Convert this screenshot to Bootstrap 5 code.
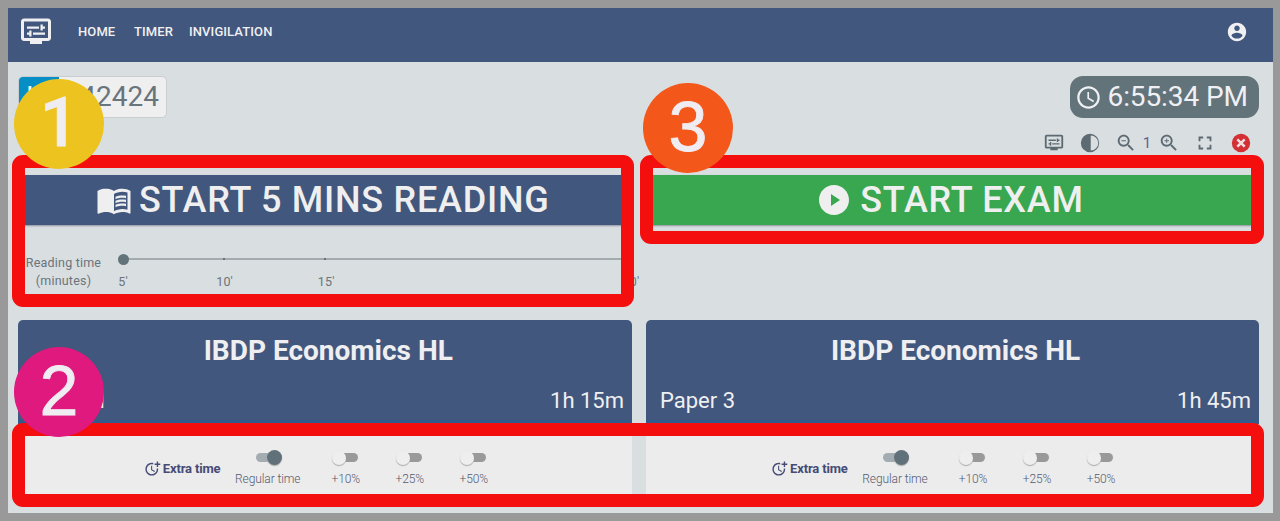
<!DOCTYPE html>
<html lang="en">
<head>
<meta charset="utf-8">
<meta name="viewport" content="width=device-width, initial-scale=1">
<title>Exam timer</title>
<link href="https://cdn.jsdelivr.net/npm/bootstrap@5.3.0/dist/css/bootstrap.min.css" rel="stylesheet">
<style>
  :root { --slate: #42577d; --paper: #d9dee1; --soft: #ececed; --grey: #62737a; }
  body { font-family: Roboto, sans-serif; background: #999; height: 521px; padding: 8px 7.5px 8px 8px; overflow: hidden; position: relative; color: #6a747b; }
  svg { fill: currentColor; display: block; flex: none; }
  .app-shell { background: var(--paper); height: 505px; }
  .top-nav { background: var(--slate); color: #f0f0f2; height: 54px; padding: 0 25px 7px 10px; --bs-navbar-padding-y: 0; }
  .top-nav .nav-link { color: #f0f0f2; font-size: 13px; font-weight: 500; letter-spacing: .1px; padding: 0; line-height: 20px; }
  .page-main { padding: 14px 14px 0 10px; }
  .code-box { width: 149px; height: 42px; border: 1px solid #c9cdd0; border-radius: 5px; background: #efeff0; font-size: 28px; overflow: hidden; }
  .code-box .tag { background: #078fc5; color: #fff; width: 40px; }
  .clock-pill { background: var(--grey); color: #f0f0f4; height: 42px; width: 189px; border-radius: 13px; font-size: 28px; gap: 6px; padding-left: 5px; letter-spacing: -.1px; }
  .tools { height: 50px; color: #5d6a72; }
  .tools > span { width: 36px; }
  .tools > small { width: 7px; font-size: 15px; color: #5d6391; }
  .halves { display: grid; grid-template-columns: 613.5px 613px; column-gap: 14px; }
  .big-btn { height: 50px; padding: 0 4px 0 0; border: 0; border-radius: 4px; font-size: 36px; font-weight: 500; line-height: 50px; letter-spacing: .75px; box-shadow: 0 1px 2px #8b939d; gap: 7px; margin-top: 7px; }
  .big-btn, .big-btn:hover { color: #efeff0; }
  .btn-exam { gap: 8px; }
  .btn-read, .btn-read:hover { background: var(--slate); }
  .btn-exam, .btn-exam:hover { background: #38a74f; }
  .slider-row { height: 95px; padding-top: 29px; font-size: 12.5px; letter-spacing: .2px; }
  .slider-row .caption { width: 91px; line-height: 18px; text-align: center; }
  .slider { width: 508px; margin-left: 14px; }
  .rail { height: 2px; background: #a3abaf; margin-top: 4px; display: flex; justify-content: space-between; align-items: center; }
  .rail i { width: 2px; height: 2px; background: #62737a; }
  .rail i:first-child { width: 11px; height: 11px; border-radius: 50%; margin: 0 -5.5px; }
  .rail i:nth-child(n+4) { background: none; }
  .marks { margin: 13px -20px 0; display: flex; justify-content: space-between; line-height: 18px; }
  .marks span { width: 40px; text-align: center; }
  .exam-card { border: 0; border-radius: 5px; background: var(--soft); overflow: hidden; height: 181px; color: inherit; }
  .exam-head { background: var(--slate); color: #efeff1; height: 104px; border-bottom: 4px solid #315b8c; padding: 15px 7.5px 0 14.5px; }
  .exam-head h2 { font-size: 28px; font-weight: 700; line-height: 32px; margin: 0 0 18px; text-align: center; }
  .exam-head .facts { font-size: 22px; line-height: 32px; }
  .extras { height: 77px; padding-top: 25px; font-size: 12px; }
  .extra-title { width: 78px; font-size: 13px; font-weight: 700; color: #454b75; gap: 2px; padding-top: 10px; letter-spacing: -.15px; }
  .opt { width: 64px; text-align: center; line-height: 15px; font-weight: 300; color: #555b70; letter-spacing: -.1px; }
  .opt.wide { width: 92px; }
  .toggle { width: 24px; height: 9px; border-radius: 5px; background: #999; margin: 4px auto 10px; display: flex; align-items: center; }
  .toggle::before { content: ""; width: 14px; height: 14px; border-radius: 50%; flex: none; background: #eeeeef; margin-left: -2px; box-shadow: 0 1px 1px #aaa; }
  .toggle.on { background: #a3adb1; }
  .toggle.on::before { background: #607179; margin-left: 11px; width: 15px; height: 15px; }
  /* tutorial callouts laid over the page */
  .callout { position: absolute; border: 13px solid #f40e0e; border-radius: 11px; pointer-events: none; }
  .step { position: absolute; width: 90px; height: 90px; border-radius: 50%; color: #efedf2; font: 70px/88px "Liberation Sans", sans-serif; text-align: center; -webkit-text-stroke: .8px #efedf2; }
  .step-one { font-family: Roboto, sans-serif; font-size: 68px; font-weight: 500; line-height: 88px; }
</style>
</head>
<body>
<svg class="d-none">
  <symbol id="monitor" viewBox="0 0 24 24"><path d="M20 3H4c-1.1 0-2 .9-2 2v11c0 1.1.9 2 2 2h4v2h8v-2h4c1.1 0 2-.9 2-2V5c0-1.1-.9-2-2-2zm0 13H4V5h16v11zM6 8.25h8v1.5H6zM16.5 9.75H18v-1.5h-1.5V7H15v4h1.5zM10 12.25h8v1.5h-8zM7.500 15H9v-4H7.500v1.250H6v1.500h1.500z"/></symbol>
  <symbol id="more-time" viewBox="0 0 24 24"><path d="M10 8v6l4.700 2.900.800-1.200-4-2.400V8zM17.920 12c.050.330.080.660.080 1 0 3.900-3.100 7-7 7s-7-3.100-7-7 3.100-7 7-7c.700 0 1.370.100 2 .290V4.230C12.360 4.080 11.690 4 11 4c-5 0-9 4-9 9s4 9 9 9 9-4 9-9c0-.340-.020-.670-.060-1zM20 5V2h-2v3h-3v2h3v3h2V7h3V5z"/></symbol>
</svg>

<div class="app-shell">
  <nav class="navbar top-nav flex-nowrap justify-content-start">
    <svg width="36" height="36"><use href="#monitor"/></svg>
    <div class="navbar-nav flex-row" style="margin-left:24px">
      <a class="nav-link" style="width:56px" href="#">HOME</a>
      <a class="nav-link" style="width:55px" href="#">TIMER</a>
      <a class="nav-link" href="#">INVIGILATION</a>
    </div>
    <svg class="ms-auto" width="22" height="22" viewBox="0 0 24 24"><path d="M12 2C6.480 2 2 6.480 2 12s4.480 10 10 10 10-4.480 10-10S17.520 2 12 2zm0 3c1.660 0 3 1.340 3 3s-1.340 3-3 3-3-1.340-3-3 1.340-3 3-3zm0 14.200c-2.500 0-4.710-1.280-6-3.220.030-1.990 4-3.080 6-3.080 1.990 0 5.970 1.090 6 3.080-1.290 1.940-3.500 3.220-6 3.220z"/></svg>
  </nav>

  <main class="page-main">
    <div class="d-flex justify-content-between">
      <div class="code-box d-flex align-items-stretch">
        <span class="tag d-flex align-items-center justify-content-center">ID</span>
        <span class="flex-fill text-end align-self-center" style="padding-right:7px">242424</span>
      </div>
      <div class="clock-pill d-flex align-items-center">
        <svg width="27" height="27" viewBox="0 0 24 24"><path d="M11.990 2C6.470 2 2 6.480 2 12s4.470 10 9.990 10C17.520 22 22 17.520 22 12S17.520 2 11.990 2zM12 20c-4.420 0-8-3.580-8-8s3.580-8 8-8 8 3.580 8 8-3.580 8-8 8zm.500-13H11v6l5.250 3.150.750-1.230-4.500-2.670z"/></svg>
        <span>6:55:34 PM</span>
      </div>
    </div>

    <div class="tools d-flex justify-content-end align-items-center">
      <span><svg class="mx-auto" width="22" height="22"><use href="#monitor"/></svg></span>
      <span><svg class="mx-auto" width="22" height="22" viewBox="0 0 24 24"><path d="M12 2a10 10 0 1 0 0 20 10 10 0 0 0 0-20zm.800 1.800a8.200 8.200 0 0 1 0 16.400z"/></svg></span>
      <span><svg class="mx-auto" width="22" height="22" viewBox="0 0 24 24"><path d="M15.500 14h-.790l-.280-.270C15.410 12.590 16 11.110 16 9.500 16 5.910 13.090 3 9.500 3S3 5.910 3 9.500 5.910 16 9.500 16c1.610 0 3.090-.590 4.230-1.570l.270.280v.790l5 4.990L20.490 19zm-6 0C7.010 14 5 11.990 5 9.500S7.010 5 9.500 5 14 7.010 14 9.500 11.990 14 9.500 14zM7 9h5v1H7z"/></svg></span>
      <small class="d-flex justify-content-center">1</small>
      <span><svg class="mx-auto" width="22" height="22" viewBox="0 0 24 24"><path d="M15.500 14h-.790l-.280-.270C15.410 12.590 16 11.110 16 9.500 16 5.910 13.090 3 9.500 3S3 5.910 3 9.500 5.910 16 9.500 16c1.610 0 3.090-.590 4.230-1.570l.270.280v.790l5 4.990L20.490 19zm-6 0C7.010 14 5 11.990 5 9.500S7.010 5 9.500 5 14 7.010 14 9.500 11.990 14 9.500 14zM12 10h-2v2H9v-2H7V9h2V7h1v2h2z"/></svg></span>
      <span><svg class="mx-auto" width="22" height="22" viewBox="0 0 24 24"><path d="M7 14H5v5h5v-2H7zM5 10h2V7h3V5H5zM17 17h-3v2h5v-5h-2zM14 5v2h3v3h2V5z"/></svg></span>
      <span style="color:#d42f35"><svg class="mx-auto" width="22" height="22" viewBox="0 0 24 24"><circle cx="12" cy="12" r="10"/><path fill="none" stroke="#f3dfe2" stroke-width="2.700" d="m8 8 8 8m0-8-8 8"/></svg></span>
    </div>

    <div class="halves">
      <div>
        <button class="btn big-btn btn-read w-100 d-flex align-items-center justify-content-center">
          <svg width="36" height="36" viewBox="0 0 24 24"><path fill-rule="evenodd" d="M21 5c-1.110-.350-2.330-.500-3.500-.500-1.950 0-4.050.400-5.500 1.500-1.450-1.100-3.550-1.500-5.500-1.500S2.450 4.900 1 6v14.650c0 .250.250.500.500.500.100 0 .150-.050.250-.050C3.100 20.450 5.050 20 6.500 20c1.950 0 4.050.400 5.500 1.500 1.350-.850 3.800-1.500 5.500-1.500 1.650 0 3.350.300 4.750 1.050.100.050.150.050.250.050.250 0 .500-.250.500-.500V6c-.600-.450-1.250-.750-2-1zm0 13.500c-1.100-.350-2.300-.500-3.500-.500-1.700 0-4.150.650-5.500 1.500V8c1.350-.850 3.800-1.500 5.500-1.500 1.200 0 2.400.150 3.500.500z"/><path d="M17.500 10.500c.880 0 1.730.090 2.500.260V9.240C19.210 9.090 18.360 9 17.500 9c-1.700 0-3.240.290-4.500.830v1.660c1.130-.640 2.700-.990 4.500-.990zM13 12.490v1.660c1.130-.640 2.700-.990 4.500-.990.880 0 1.730.090 2.500.260V11.900c-.790-.150-1.640-.240-2.500-.240-1.700 0-3.240.300-4.500.830zM17.500 14.330c-1.700 0-3.240.290-4.500.830v1.660c1.130-.640 2.700-.990 4.500-.990.880 0 1.730.090 2.500.260v-1.520c-.790-.160-1.640-.240-2.500-.240z"/></svg>
          <span>START 5 MINS READING</span>
        </button>
        <div class="slider-row d-flex">
          <div class="caption">Reading time<br>(minutes)</div>
          <div class="slider">
            <div class="rail"><i></i><i></i><i></i><i></i><i></i><i></i></div>
            <div class="marks"><span>5'</span><span>10'</span><span>15'</span><span></span><span></span><span>30'</span></div>
          </div>
        </div>
      </div>
      <div>
        <button class="btn big-btn btn-exam w-100 d-flex align-items-center justify-content-center">
          <svg width="36" height="36" viewBox="0 0 24 24"><path d="M12 2C6.480 2 2 6.480 2 12s4.480 10 10 10 10-4.480 10-10S17.520 2 12 2zm-2 14v-8l6 4z"/></svg>
          <span>START EXAM</span>
        </button>
      </div>

      <section class="card exam-card">
        <div class="exam-head">
          <h2>IBDP Economics HL</h2>
          <div class="facts d-flex justify-content-between"><span>Paper 1</span><span>1h 15m</span></div>
        </div>
        <div class="extras d-flex justify-content-center">
          <div class="extra-title d-flex align-items-center align-self-start"><svg width="17" height="17"><use href="#more-time"/></svg>Extra time</div>
          <div class="opt wide"><div class="toggle on"></div>Regular time</div>
          <div class="opt"><div class="toggle"></div>+10%</div>
          <div class="opt"><div class="toggle"></div>+25%</div>
          <div class="opt"><div class="toggle"></div>+50%</div>
        </div>
      </section>
      <section class="card exam-card">
        <div class="exam-head">
          <h2>IBDP Economics HL</h2>
          <div class="facts d-flex justify-content-between"><span>Paper 3</span><span>1h 45m</span></div>
        </div>
        <div class="extras d-flex justify-content-center">
          <div class="extra-title d-flex align-items-center align-self-start"><svg width="17" height="17"><use href="#more-time"/></svg>Extra time</div>
          <div class="opt wide"><div class="toggle on"></div>Regular time</div>
          <div class="opt"><div class="toggle"></div>+10%</div>
          <div class="opt"><div class="toggle"></div>+25%</div>
          <div class="opt"><div class="toggle"></div>+50%</div>
        </div>
      </section>
    </div>
  </main>
</div>

<div class="callout" style="left:12px;top:155px;width:622px;height:152px"></div>
<div class="callout" style="left:640px;top:155px;width:624px;height:89px"></div>
<div class="callout" style="left:12px;top:423px;width:1252px;height:84px"></div>
<div class="step step-one" style="left:14px;top:79px;background:#edc320">1</div>
<div class="step" style="left:14px;top:347px;background:#df197d">2</div>
<div class="step" style="left:643px;top:83px;background:#f4571a">3</div>
<script src="https://cdn.jsdelivr.net/npm/bootstrap@5.3.0/dist/js/bootstrap.bundle.min.js"></script>
</body>
</html>
